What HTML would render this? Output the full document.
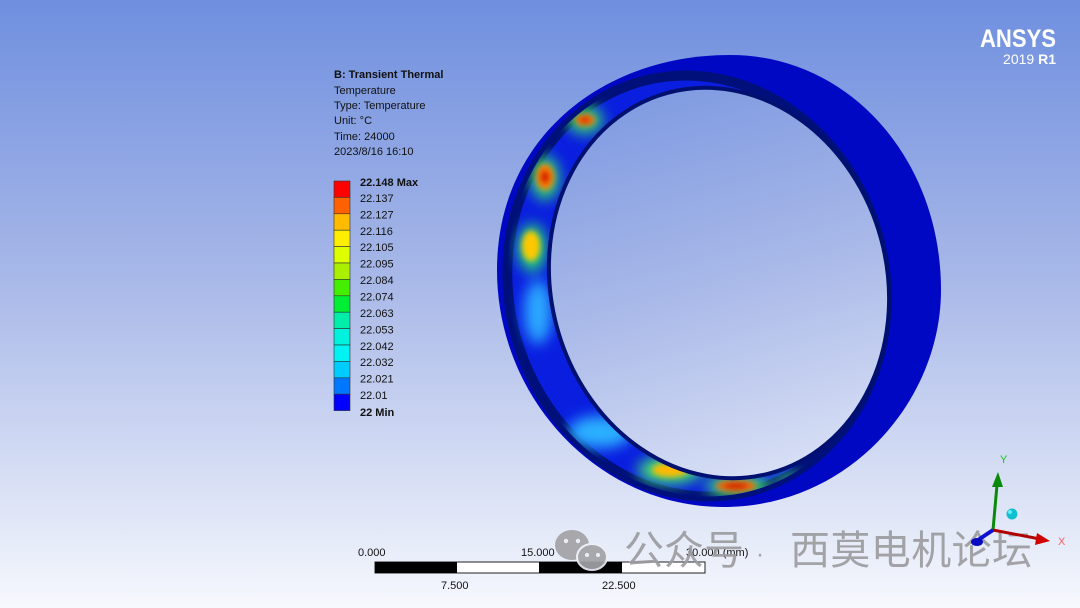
<!DOCTYPE html>
<html><head><meta charset="utf-8"><style>
html,body{margin:0;padding:0;width:1080px;height:608px;overflow:hidden}
svg{display:block}
.t{font-family:"Liberation Sans","DejaVu Sans",sans-serif;font-size:11px;fill:#111}
</style></head><body>
<svg width="1080" height="608" viewBox="0 0 1080 608" xmlns="http://www.w3.org/2000/svg">
<defs>
<linearGradient id="bg" gradientUnits="userSpaceOnUse" x1="0" y1="0" x2="0" y2="608">
<stop offset="0" stop-color="#6f8fdf"/><stop offset="0.46" stop-color="#a8b8e8"/><stop offset="1" stop-color="#f6f8fd"/>
</linearGradient>
<filter id="b6" x="-50%" y="-50%" width="200%" height="200%"><feGaussianBlur stdDeviation="7"/></filter>
<filter id="b3" x="-50%" y="-50%" width="200%" height="200%"><feGaussianBlur stdDeviation="3"/></filter>
<clipPath id="inner"><ellipse cx="697" cy="286" rx="188" ry="212" transform="rotate(-15 697 286)"/></clipPath>
</defs>
<rect width="1080" height="608" fill="url(#bg)"/>

<!-- outer silhouette / exterior -->
<path d="M730,55 C850,55 941,160 941,290 C941,400 850,507 723,507 C600,507 497,400 497,270 C497,140 600,55 730,55Z" fill="#0008c4"/>
<!-- inner visible surface -->
<ellipse cx="697" cy="286" rx="188" ry="212" transform="rotate(-15 697 286)" fill="#0a1ee0" stroke="#00107a" stroke-width="10"/>
<g clip-path="url(#inner)">
<g filter="url(#b6)">
<ellipse cx="532" cy="248" rx="14" ry="24" fill="#28d870"/>
<ellipse cx="545" cy="178" rx="14" ry="22" fill="#30d870"/>
<ellipse cx="585" cy="120" rx="18" ry="14" fill="#30d070"/>
<ellipse cx="538" cy="312" rx="14" ry="32" fill="#2aa8ff"/>
<ellipse cx="600" cy="432" rx="32" ry="16" fill="#2ab0ff"/>
<ellipse cx="670" cy="470" rx="32" ry="14" fill="#40e070"/>
<ellipse cx="738" cy="486" rx="32" ry="11" fill="#40e070"/>
<ellipse cx="790" cy="480" rx="16" ry="6" fill="#30c070"/>
</g>
<g filter="url(#b3)">
<ellipse cx="531" cy="246" rx="9" ry="15" fill="#ffc800"/>
<ellipse cx="545" cy="177" rx="9" ry="13" fill="#ff8000"/>
<ellipse cx="545" cy="177" rx="5" ry="7" fill="#d81000"/>
<ellipse cx="585" cy="120" rx="10" ry="6" fill="#ff7000"/>
<ellipse cx="585" cy="120" rx="5" ry="3" fill="#d81000"/>
<ellipse cx="670" cy="470" rx="18" ry="7" fill="#ffb800"/>
<ellipse cx="736" cy="486" rx="20" ry="6" fill="#ff6000"/>
<ellipse cx="736" cy="486" rx="12" ry="3" fill="#c81000"/>
</g>
</g>
<!-- hole -->
<ellipse cx="719" cy="283" rx="168" ry="197" transform="rotate(-15 719 283)" fill="url(#bg)" stroke="#001070" stroke-width="4"/>

<!-- legend -->
<text class="t" x="334" y="78" font-weight="bold" font-size="12">B: Transient Thermal</text>
<text class="t" x="334" y="94">Temperature</text>
<text class="t" x="334" y="109">Type: Temperature</text>
<text class="t" x="334" y="124">Unit: °C</text>
<text class="t" x="334" y="140">Time: 24000</text>
<text class="t" x="334" y="155">2023/8/16 16:10</text>
<g stroke="#333" stroke-width="0.6">
<rect x="334" y="181" width="16" height="16.4" fill="#ff0000"/>
<rect x="334" y="197.4" width="16" height="16.4" fill="#ff6000"/>
<rect x="334" y="213.8" width="16" height="16.4" fill="#ffbb00"/>
<rect x="334" y="230.2" width="16" height="16.4" fill="#ffee00"/>
<rect x="334" y="246.6" width="16" height="16.4" fill="#ddff00"/>
<rect x="334" y="263" width="16" height="16.4" fill="#aaee00"/>
<rect x="334" y="279.4" width="16" height="16.4" fill="#44ee00"/>
<rect x="334" y="295.8" width="16" height="16.4" fill="#00ee33"/>
<rect x="334" y="312.2" width="16" height="16.4" fill="#00eeaa"/>
<rect x="334" y="328.6" width="16" height="16.4" fill="#00f2dd"/>
<rect x="334" y="345" width="16" height="16.4" fill="#00f2f2"/>
<rect x="334" y="361.4" width="16" height="16.4" fill="#00ccff"/>
<rect x="334" y="377.8" width="16" height="16.4" fill="#0077ff"/>
<rect x="334" y="394.2" width="16" height="16.4" fill="#0000ff"/>
</g>
<g class="t" font-size="11.5">
<text x="360" y="186" font-weight="bold">22.148 Max</text>
<text x="360" y="202">22.137</text>
<text x="360" y="218.5">22.127</text>
<text x="360" y="235">22.116</text>
<text x="360" y="251">22.105</text>
<text x="360" y="267.5">22.095</text>
<text x="360" y="284">22.084</text>
<text x="360" y="300.5">22.074</text>
<text x="360" y="317">22.063</text>
<text x="360" y="333.5">22.053</text>
<text x="360" y="350">22.042</text>
<text x="360" y="366">22.032</text>
<text x="360" y="382.5">22.021</text>
<text x="360" y="399">22.01</text>
<text x="360" y="416" font-weight="bold">22 Min</text>
</g>

<!-- ANSYS logo -->
<text x="980" y="47" font-family="Liberation Sans,sans-serif" font-weight="bold" font-size="25" fill="#fff" textLength="76" lengthAdjust="spacingAndGlyphs">ANSYS</text>
<text x="1056" y="64" text-anchor="end" font-family="Liberation Sans,sans-serif" font-size="14" fill="#fff">2019 <tspan font-weight="bold">R1</tspan></text>

<!-- scale bar -->
<g class="t">
<text x="358" y="556">0.000</text>
<text x="521" y="556">15.000</text>
<text x="686" y="556">30.000 (mm)</text>
<text x="441" y="589">7.500</text>
<text x="602" y="589">22.500</text>
</g>
<rect x="375" y="562" width="330" height="11" fill="#fff" stroke="#222" stroke-width="1"/>
<rect x="375" y="562" width="82" height="11" fill="#000"/>
<rect x="539" y="562" width="83" height="11" fill="#000"/>

<!-- watermark -->
<g fill="#a2a2a6" opacity="0.92">
<ellipse cx="572" cy="545" rx="17" ry="15"/>
<ellipse cx="592" cy="557" rx="15" ry="13" stroke="#eef0f8" stroke-width="2"/>
<circle cx="566" cy="541" r="2.2" fill="#eef0f8"/><circle cx="578" cy="541" r="2.2" fill="#eef0f8"/>
<circle cx="587" cy="555" r="2" fill="#eef0f8"/><circle cx="598" cy="555" r="2" fill="#eef0f8"/>
</g>
<g font-family="Liberation Sans,'Noto Sans CJK SC',sans-serif" font-size="40" fill="#9c9ca0" opacity="0.92">
<text x="624" y="564">公众号</text>
<text x="756" y="562" font-size="24">·</text>
<text x="790" y="564" textLength="242" lengthAdjust="spacing">西莫电机论坛</text>
</g>

<!-- triad -->
<line x1="993" y1="530" x2="997" y2="485" stroke="#0a8a0a" stroke-width="3"/>
<polygon points="998,472 992,487 1003,487" fill="#0a8a0a"/>
<text x="1000" y="463" font-family="Liberation Sans,sans-serif" font-size="11" fill="#20c020">Y</text>
<line x1="993" y1="530" x2="1040" y2="539" stroke="#b00000" stroke-width="3"/>
<polygon points="1050,541 1037,533 1035,545" fill="#d00000"/>
<text x="1058" y="545" font-family="Liberation Sans,sans-serif" font-size="11" fill="#ff6060">X</text>
<line x1="993" y1="530" x2="978" y2="540" stroke="#1010d0" stroke-width="4"/>
<ellipse cx="977" cy="542" rx="6" ry="4" fill="#0a0ac0"/>
<circle cx="1012" cy="514" r="5.5" fill="#10c0d0"/>
<circle cx="1010" cy="512" r="2" fill="#60f0f0"/>
</svg>
</body></html>
